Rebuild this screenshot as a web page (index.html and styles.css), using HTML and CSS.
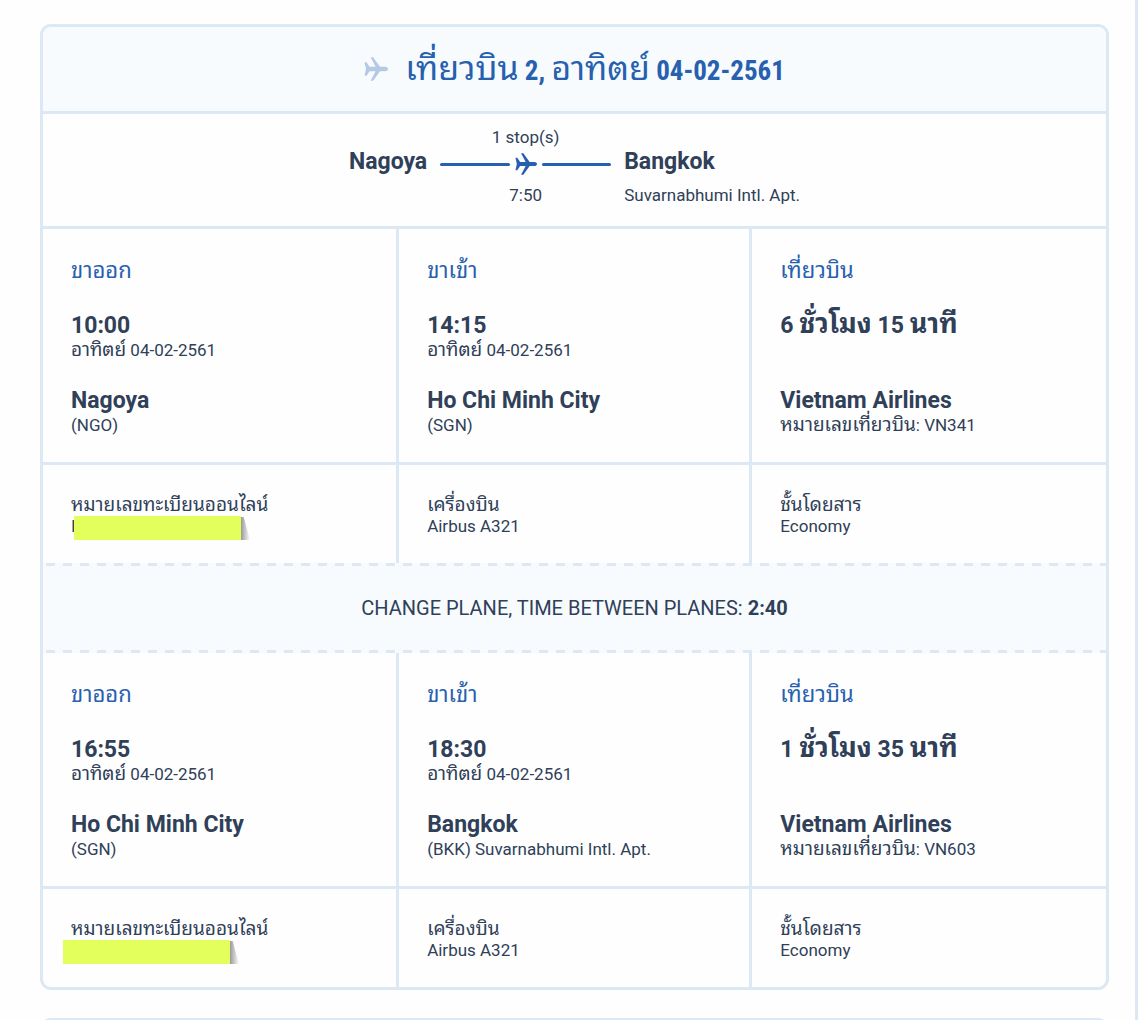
FILE: index.html
```
<!DOCTYPE html>
<html lang="th">
<head>
  <meta charset="UTF-8" />
  <meta name="viewport" content="width=device-width, initial-scale=1.0"/>
  <title>เที่ยวบิน 2</title>
  <link rel="stylesheet" href="styles.css">
</head>
<body>
  <svg class="symbols" aria-hidden="true">
    <symbol id="plane" viewBox="0 0 24 24">
      <path d="M.5 5.2h2L5.6 9.7h6L6.6.3h2.5L16 9.7h5.2c1.5 0 2.8 1 2.8 2.3s-1.300 2.300-2.800 2.300H16L9.100 23.700H6.600l5-9.400h-6L2.500 18.800h-2L2 12z"/>
    </symbol>
  </svg>

  <main class="page">
    <section class="card">
      <header class="card-header">
        <svg class="title-icon" aria-hidden="true"><use href="#plane"/></svg>
        <h1>เที่ยวบิน<b> 2, </b>อาทิตย์<b> 04-02-2561</b></h1>
      </header>

      <div class="route">
        <div class="place">Nagoya</div>
        <div class="path">
          <div class="small">1 stop(s)</div>
          <div class="path-line">
            <span class="line"></span>
            <svg class="path-icon" aria-hidden="true"><use href="#plane"/></svg>
            <span class="line"></span>
          </div>
          <div class="small">7:50</div>
        </div>
        <div class="place">Bangkok
          <div class="small airport">Suvarnabhumi Intl. Apt.</div>
        </div>
      </div>

      <div class="row">
        <div class="cell">
          <h2>ขาออก</h2>
          <div class="block"><strong>10:00</strong><p><span class="th">อาทิตย์</span> 04-02-2561</p></div>
          <div class="block"><strong>Nagoya</strong><p>(NGO)</p></div>
        </div>
        <div class="cell">
          <h2>ขาเข้า</h2>
          <div class="block"><strong>14:15</strong><p><span class="th">อาทิตย์</span> 04-02-2561</p></div>
          <div class="block"><strong>Ho Chi Minh City</strong><p>(SGN)</p></div>
        </div>
        <div class="cell">
          <h2>เที่ยวบิน</h2>
          <div class="block"><strong>6 <span class="th">ชั่วโมง</span> 15 <span class="th">นาที</span></strong></div>
          <div class="block"><strong>Vietnam Airlines</strong><p><span class="th">หมายเลขเที่ยวบิน</span>: VN341</p></div>
        </div>
      </div>
      <div class="row details">
        <div class="cell">
          <p><span class="th">หมายเลขทะเบียนออนไลน์</span></p>
          <p class="code">I<span class="marker"></span></p>
        </div>
        <div class="cell"><p><span class="th">เครื่องบิน</span></p><p>Airbus A321</p></div>
        <div class="cell"><p><span class="th">ชั้นโดยสาร</span></p><p>Economy</p></div>
      </div>

      <div class="change">CHANGE PLANE, TIME BETWEEN PLANES: <b>2:40</b></div>

      <div class="row">
        <div class="cell">
          <h2>ขาออก</h2>
          <div class="block"><strong>16:55</strong><p><span class="th">อาทิตย์</span> 04-02-2561</p></div>
          <div class="block"><strong>Ho Chi Minh City</strong><p>(SGN)</p></div>
        </div>
        <div class="cell">
          <h2>ขาเข้า</h2>
          <div class="block"><strong>18:30</strong><p><span class="th">อาทิตย์</span> 04-02-2561</p></div>
          <div class="block"><strong>Bangkok</strong><p>(BKK) Suvarnabhumi Intl. Apt.</p></div>
        </div>
        <div class="cell">
          <h2>เที่ยวบิน</h2>
          <div class="block"><strong>1 <span class="th">ชั่วโมง</span> 35 <span class="th">นาที</span></strong></div>
          <div class="block"><strong>Vietnam Airlines</strong><p><span class="th">หมายเลขเที่ยวบิน</span>: VN603</p></div>
        </div>
      </div>
      <div class="row details">
        <div class="cell">
          <p><span class="th">หมายเลขทะเบียนออนไลน์</span></p>
          <p class="code"><span class="marker marker-left"></span></p>
        </div>
        <div class="cell"><p><span class="th">เครื่องบิน</span></p><p>Airbus A321</p></div>
        <div class="cell"><p><span class="th">ชั้นโดยสาร</span></p><p>Economy</p></div>
      </div>
    </section>

    <section class="card next-card"></section>
  </main>
</body>
</html>
```
FILE: styles.css
```
:root {
  --blue: #2660ae;
  --text: #2f4058;
  --line: #dce8f4;
  --tint: #f7fbfe;
  --marker: #e2ff5b;
}

* {
  box-sizing: border-box;
}

body {
  margin: 0;
  background-color: #fefefe;
  color: var(--text);
  font-family: Roboto, "Noto Sans Thai Looped", Loma, Garuda, Waree, sans-serif;
}

h1, h2, p {
  margin: 0;
  font-weight: 400;
}

.symbols {
  display: none;
}

.page {
  height: 100vh;
  overflow: hidden;
  padding: 24px 26px 0 40px;
  border-right: 3px solid var(--line);
}

.card {
  border: 3px solid var(--line);
  border-radius: 11px;
  overflow: hidden;
}

.card-header {
  display: flex;
  justify-content: center;
  align-items: center;
  gap: 17px;
  height: 87px;
  background-color: var(--tint);
  border-bottom: 3px solid var(--line);
}

.title-icon {
  width: 24px;
  height: 24px;
  fill: #b5c9e5;
}

h1 {
  color: var(--blue);
  font-size: 34px;
  line-height: 40px;
}

h1 b {
  font-family: "Roboto Condensed", Roboto, sans-serif;
  font-size: 27px;
}

.route {
  display: flex;
  justify-content: center;
  gap: 13px;
  padding: 11px 0 19px;
  border-bottom: 3px solid var(--line);
}

.place {
  padding-top: 21px;
  font-size: 23px;
  font-weight: 700;
  line-height: 32px;
}

.small {
  font-size: 17px;
  font-weight: 400;
  line-height: 24px;
}

.airport {
  margin-top: 5px;
}

.path {
  width: 171px;
  text-align: center;
}

.path-line {
  display: flex;
  align-items: center;
  gap: 5px;
  height: 30px;
  margin-bottom: 4px;
}

.line {
  flex: 1;
  height: 3px;
  border-radius: 2px;
  background-color: var(--blue);
}

.path-icon {
  width: 22px;
  height: 22px;
  fill: var(--blue);
}

.row {
  display: grid;
  grid-template-columns: 1fr 1fr 1.01fr;
}

.cell {
  padding: 30px 28px 0;
  height: 233px;
}

.cell + .cell {
  border-left: 3px solid var(--line);
}

h2 {
  color: var(--blue);
  font-size: 22px;
  line-height: 24px;
  margin-bottom: 29px;
}

.block {
  min-height: 50px;
  margin-bottom: 25px;
}

.block strong {
  display: block;
  font-size: 23px;
  line-height: 28px;
}

.block p {
  font-size: 17px;
  line-height: 20px;
}

/* Thai glyphs run smaller than Roboto at the same size */
.th {
  font-size: 19px;
  line-height: 16px;
}

strong .th {
  font-size: 27px;
}

.details {
  border-top: 3px solid var(--line);
}

.details .cell {
  height: 98px;
  font-size: 17px;
  line-height: 21px;
}

.code {
  position: relative;
  min-height: 21px;
}

.marker {
  position: absolute;
  top: 0;
  left: 3px;
  width: 167px;
  height: 24px;
  background-color: var(--marker);
}

.marker-left {
  left: -8px;
}

/* lifted corner shadow */
.marker::after {
  content: "";
  position: absolute;
  top: 1px;
  left: 100%;
  width: 9px;
  height: 23px;
  background: linear-gradient(to right, #999, #fefefe);
  clip-path: polygon(0 0, 30% 0, 100% 100%, 0 100%);
}

/* long dashes along the top and bottom edges */
.change {
  --dashes: repeating-linear-gradient(to right, var(--line) 0 9px, transparent 9px 17px);
  padding: 3px 0;
  background: var(--dashes) 3px 0 / 100% 3px no-repeat, var(--dashes) 3px 100% / 100% 3px no-repeat, var(--tint);
  font-size: 20px;
  line-height: 84px;
  text-align: center;
}

.next-card {
  margin-top: 28px;
  height: 80px;
}
```
